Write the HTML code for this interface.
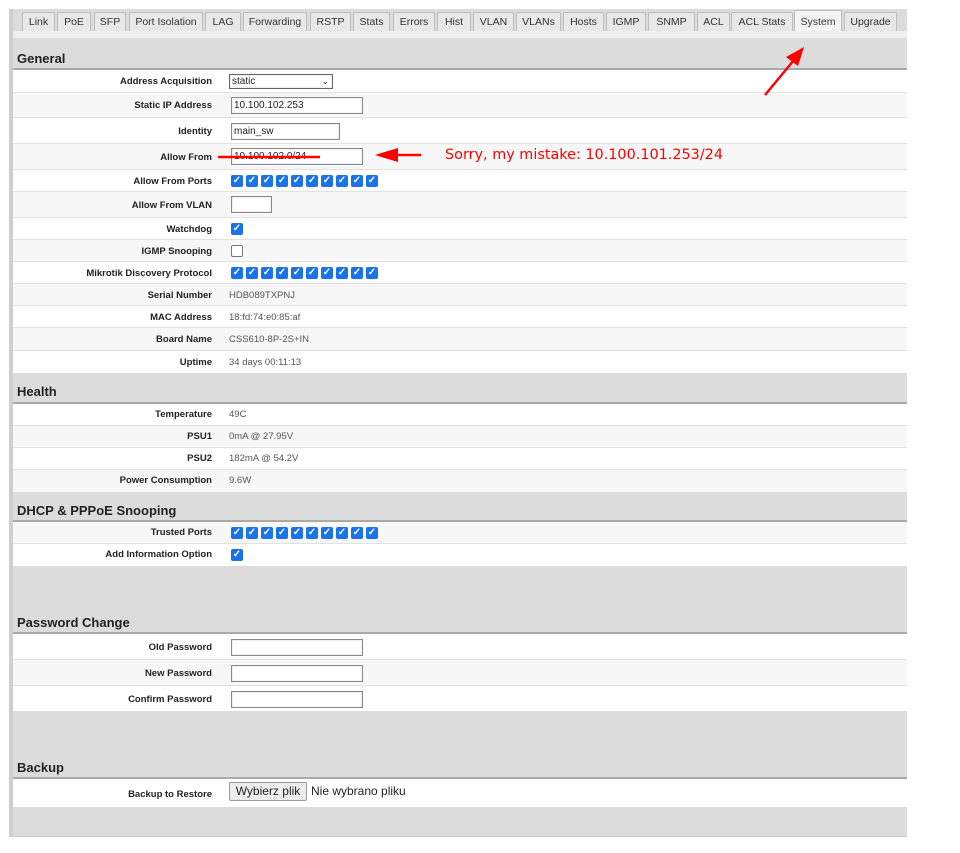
<!DOCTYPE html>
<html><head><meta charset="utf-8"><style>
*{margin:0;padding:0;box-sizing:border-box}
body{width:960px;height:853px;background:#fff;position:relative;font-family:"Liberation Sans",Arial,sans-serif;overflow:hidden}
#panel{position:absolute;left:9px;top:9px;width:898px;height:828px;background:#dcdcdc;border-left:4px solid #cfcfcf;border-bottom:1px solid #c8c8c8}
.tab{position:absolute;top:12px;height:19px;background:#e8e8e8;border:1px solid #bdbdbd;border-bottom:none;font-size:10.5px;color:#333;text-align:center;line-height:19px;border-radius:2px 2px 0 0}
.tab.act{top:10px;height:21px;background:#f4f4f4;line-height:22px}
#strip{position:absolute;left:13px;top:31px;width:894px;height:7px;background:#efefef}
.hd{position:absolute;left:13px;width:894px;border-bottom:2px solid #a9a9a9;font-weight:bold;font-size:13px;color:#222;padding-left:4px}
.row{position:absolute;left:13px;width:894px;border-bottom:1px solid #e2e2e2;background:#fff}
.row.a{background:#f7f7f7}
.lb{position:absolute;right:695px;font-weight:bold;font-size:9.5px;color:#222;white-space:nowrap}
.vl{position:absolute;left:216px;font-size:9.5px;color:#555;white-space:nowrap}
.in{position:absolute;left:218px;height:17px;border:1px solid #888;background:#fff;font-size:10px;padding-left:2px;line-height:15px;color:#222;box-shadow:inset 0 0 1px #aaa}
.cbs{position:absolute;left:218px;display:flex;gap:3px}
.cb{width:12px;height:12px;border-radius:2px;background:#1a73e8;color:#fff;font-size:10px;line-height:12px;text-align:center;font-weight:bold}
.cb.off{background:#fff;border:1px solid #777}
</style></head><body>
<div id="panel"></div>
<div class="tab" style="left:22px;width:33px">Link</div>
<div class="tab" style="left:57px;width:34px">PoE</div>
<div class="tab" style="left:94px;width:32px">SFP</div>
<div class="tab" style="left:129px;width:74px">Port Isolation</div>
<div class="tab" style="left:205px;width:36px">LAG</div>
<div class="tab" style="left:243px;width:64px">Forwarding</div>
<div class="tab" style="left:310px;width:41px">RSTP</div>
<div class="tab" style="left:353px;width:37px">Stats</div>
<div class="tab" style="left:393px;width:42px">Errors</div>
<div class="tab" style="left:437px;width:34px">Hist</div>
<div class="tab" style="left:473px;width:41px">VLAN</div>
<div class="tab" style="left:516px;width:45px">VLANs</div>
<div class="tab" style="left:563px;width:41px">Hosts</div>
<div class="tab" style="left:606px;width:40px">IGMP</div>
<div class="tab" style="left:648px;width:47px">SNMP</div>
<div class="tab" style="left:697px;width:33px">ACL</div>
<div class="tab" style="left:731px;width:62px">ACL Stats</div>
<div class="tab act" style="left:794px;width:48px">System</div>
<div class="tab" style="left:844px;width:53px">Upgrade</div>
<div id="strip"></div>

<div class="hd" style="top:38px;height:32px;padding-top:13px">General</div>
<div class="row" style="top:70px;height:23px"><span class="lb" style="top:6px">Address Acquisition</span><div class="in" style="left:216px;top:4px;width:104px;height:15px;line-height:13px;border-color:#666">static<span style="position:absolute;right:3px;top:0;font-size:9px">&#x2304;</span></div></div>
<div class="row a" style="top:93px;height:25px"><span class="lb" style="top:7px">Static IP Address</span><div class="in" style="top:4px;width:132px">10.100.102.253</div></div>
<div class="row" style="top:118px;height:26px"><span class="lb" style="top:8px">Identity</span><div class="in" style="top:5px;width:109px">main_sw</div></div>
<div class="row a" style="top:144px;height:26px"><span class="lb" style="top:8px">Allow From</span><div class="in" style="top:4px;width:132px">10.100.102.0/24</div></div>
<div class="row" style="top:170px;height:22px"><span class="lb" style="top:6px">Allow From Ports</span><div class="cbs" style="top:5px"><div class="cb">✓</div><div class="cb">✓</div><div class="cb">✓</div><div class="cb">✓</div><div class="cb">✓</div><div class="cb">✓</div><div class="cb">✓</div><div class="cb">✓</div><div class="cb">✓</div><div class="cb">✓</div></div></div>
<div class="row a" style="top:192px;height:26px"><span class="lb" style="top:8px">Allow From VLAN</span><div class="in" style="top:4px;width:41px"></div></div>
<div class="row" style="top:218px;height:22px"><span class="lb" style="top:6px">Watchdog</span><div class="cbs" style="top:5px"><div class="cb">✓</div></div></div>
<div class="row a" style="top:240px;height:22px"><span class="lb" style="top:6px">IGMP Snooping</span><div class="cbs" style="top:5px"><div class="cb off"></div></div></div>
<div class="row" style="top:262px;height:22px"><span class="lb" style="top:6px">Mikrotik Discovery Protocol</span><div class="cbs" style="top:5px"><div class="cb">✓</div><div class="cb">✓</div><div class="cb">✓</div><div class="cb">✓</div><div class="cb">✓</div><div class="cb">✓</div><div class="cb">✓</div><div class="cb">✓</div><div class="cb">✓</div><div class="cb">✓</div></div></div>
<div class="row a" style="top:284px;height:22px"><span class="lb" style="top:6px">Serial Number</span><span class="vl" style="top:6px">HDB089TXPNJ</span></div>
<div class="row" style="top:306px;height:22px"><span class="lb" style="top:6px">MAC Address</span><span class="vl" style="top:6px">18:fd:74:e0:85:af</span></div>
<div class="row a" style="top:328px;height:23px"><span class="lb" style="top:6px">Board Name</span><span class="vl" style="top:6px">CSS610-8P-2S+IN</span></div>
<div class="row" style="top:351px;height:22px;border-bottom:none"><span class="lb" style="top:6px">Uptime</span><span class="vl" style="top:6px">34 days 00:11:13</span></div>

<div class="hd" style="top:373px;height:31px;padding-top:11px">Health</div>
<div class="row" style="top:404px;height:22px"><span class="lb" style="top:5px">Temperature</span><span class="vl" style="top:5px">49C</span></div>
<div class="row a" style="top:426px;height:22px"><span class="lb" style="top:5px">PSU1</span><span class="vl" style="top:5px">0mA @ 27.95V</span></div>
<div class="row" style="top:448px;height:22px"><span class="lb" style="top:5px">PSU2</span><span class="vl" style="top:5px">182mA @ 54.2V</span></div>
<div class="row a" style="top:470px;height:22px;border-bottom:none"><span class="lb" style="top:5px">Power Consumption</span><span class="vl" style="top:5px">9.6W</span></div>

<div class="hd" style="top:492px;height:30px;padding-top:11px">DHCP &amp; PPPoE Snooping</div>
<div class="row a" style="top:522px;height:22px"><span class="lb" style="top:5px">Trusted Ports</span><div class="cbs" style="top:5px"><div class="cb">✓</div><div class="cb">✓</div><div class="cb">✓</div><div class="cb">✓</div><div class="cb">✓</div><div class="cb">✓</div><div class="cb">✓</div><div class="cb">✓</div><div class="cb">✓</div><div class="cb">✓</div></div></div>
<div class="row" style="top:544px;height:22px;border-bottom:none"><span class="lb" style="top:5px">Add Information Option</span><div class="cbs" style="top:5px"><div class="cb">✓</div></div></div>

<div class="hd" style="top:566px;height:68px;padding-top:49px">Password Change</div>
<div class="row" style="top:634px;height:26px"><span class="lb" style="top:8px">Old Password</span><div class="in" style="top:5px;width:132px"></div></div>
<div class="row a" style="top:660px;height:26px"><span class="lb" style="top:8px">New Password</span><div class="in" style="top:5px;width:132px"></div></div>
<div class="row" style="top:686px;height:25px;border-bottom:none"><span class="lb" style="top:8px">Confirm Password</span><div class="in" style="top:5px;width:132px"></div></div>

<div class="hd" style="top:711px;height:68px;padding-top:49px">Backup</div>
<div class="row" style="top:779px;height:28px;border-bottom:none"><span class="lb" style="top:10px">Backup to Restore</span><div style="position:absolute;left:216px;top:3px;height:19px;width:78px;border:1px solid #999;border-radius:2px;background:#eee;font-size:12px;line-height:17px;text-align:center;color:#222">Wybierz plik</div><span style="position:absolute;left:298px;top:5px;font-size:12px;color:#222">Nie wybrano pliku</span></div>

<svg width="960" height="853" style="position:absolute;left:0;top:0" viewBox="0 0 960 853">
<line x1="218" y1="157" x2="320" y2="157" stroke="#f00" stroke-width="2.5"/>
<line x1="395" y1="155" x2="421" y2="155" stroke="#f00" stroke-width="2.5"/>
<polygon points="375,155 398,148 398,162" fill="#f00"/>
<line x1="765" y1="95" x2="794" y2="60" stroke="#f00" stroke-width="2.5"/>
<polygon points="804,47 786,57 798,66" fill="#f00"/>
<text x="445" y="159" fill="#f00" font-family="DejaVu Sans, sans-serif" font-size="14.4" textLength="278" lengthAdjust="spacingAndGlyphs">Sorry, my mistake: 10.100.101.253/24</text>
</svg>
</body></html>
